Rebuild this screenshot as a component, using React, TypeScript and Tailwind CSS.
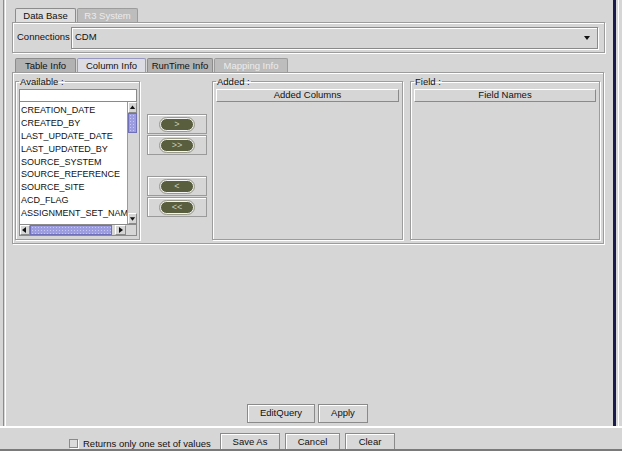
const etched = 'border border-[#9c9c9c] shadow-[inset_1px_1px_0_#ffffff,1px_1px_0_#ffffff]';
const raised = 'border-t border-l border-white border-r border-b border-r-[#8a8a8a] border-b-[#8a8a8a]';

const columns = [
  'CREATION_DATE',
  'CREATED_BY',
  'LAST_UPDATE_DATE',
  'LAST_UPDATED_BY',
  'SOURCE_SYSTEM',
  'SOURCE_REFERENCE',
  'SOURCE_SITE',
  'ACD_FLAG',
  'ASSIGNMENT_SET_NAME',
];

function Arrow({ dir }: { dir: 'up' | 'down' | 'left' | 'right' }) {
  const pts: Record<string, string> = {
    up: '1,5 4,1 7,5',
    down: '1,2 4,6 7,2',
    left: '5,1 1,4 5,7',
    right: '2,1 6,4 2,7',
  };
  return (
    <svg width="8" height="8" viewBox="0 0 8 8">
      <polygon points={pts[dir]} fill="#111" />
    </svg>
  );
}

function Tab({ label, state, width }: { label: string; state: 'active' | 'dark' | 'disabled' | 'light'; width: string }) {
  const styles: Record<string, string> = {
    active: 'bg-[#dcdce4] border-[#9898c0] text-[#111]',
    light: 'bg-[#dedede] border-[#8c8c8c] text-[#111]',
    dark: 'bg-[#b2b2b2] border-[#8c8c8c] text-[#111]',
    disabled: 'bg-[#bdbdbd] border-[#9c9c9c] text-[#ececec]',
  };
  return (
    <div className={`${width} h-[14px] ${styles[state]} border border-b-0 rounded-t-[2px] flex items-center justify-center leading-none whitespace-nowrap`}>
      {label}
    </div>
  );
}

function MoveButton({ label }: { label: string }) {
  return (
    <div className="w-[60px] h-[20px] border border-[#9a9a9a] shadow-[inset_1px_1px_0_#ffffff] flex items-center justify-center">
      <div className="w-[34px] h-[13px] rounded-full bg-[#585e3e] border border-[#f4f4f4] outline outline-1 outline-[#9a9a8a] flex items-center justify-center text-[#c9cbb5] text-[9px] leading-none">
        {label}
      </div>
    </div>
  );
}

function PushButton({ label, width, height = 'h-[19px]' }: { label: string; width: string; height?: string }) {
  return (
    <div className={`${width} ${height} border border-[#8a8a8a] shadow-[inset_1px_1px_0_#ffffff] bg-[#d8d8d8] flex items-center justify-center text-[#111] shrink-0`}>
      {label}
    </div>
  );
}

export default function App() {
  return (
    <div
      className="w-[622px] h-[451px] bg-[#d6d6d6] overflow-hidden flex flex-col text-[9.5px] text-[#111]"
      style={{ fontFamily: '"Liberation Sans", Arial, sans-serif' }}
    >
      <div className="h-[426px] flex shrink-0">
        <div className="w-[3px]" />
        <div className="w-[3px] border-l border-[#8c8c8c] border-r border-r-white" />
        <div className="w-[607px] pl-[6px] pt-[8px] flex flex-col">
          {/* outer tabs */}
          <div className="flex gap-[1px] pl-[3px]">
            <Tab label="Data Base" state="light" width="w-[61px]" />
            <Tab label="R3 System" state="disabled" width="w-[61px]" />
          </div>
          <div className={`w-[593px] h-[31px] ${etched} flex items-center pl-[4px] pr-[6px]`}>
            <span className="w-[54px]">Connections</span>
            <div className="flex-1 h-[22px] border border-[#8a8a8a] shadow-[inset_1px_1px_0_#ffffff,1px_1px_0_#ffffff] flex items-center pl-[3px] pr-[6px]">
              <span className="flex-1">CDM</span>
              <Arrow dir="down" />
            </div>
          </div>

          {/* inner tabs */}
          <div className="flex gap-[1px] pl-[3px] mt-[5px]">
            <Tab label="Table Info" state="dark" width="w-[61px]" />
            <Tab label="Column Info" state="active" width="w-[69px]" />
            <Tab label="RunTime Info" state="dark" width="w-[66px]" />
            <Tab label="Mapping Info" state="disabled" width="w-[74px]" />
          </div>
          <div className={`w-[592px] h-[172px] ${etched} flex pl-[2px] pt-[3px]`}>
            {/* Available */}
            <fieldset className={`w-[125px] h-[164px] ${etched} pl-[3px] pr-[2px]`}>
              <legend className="px-[1px] leading-[11px]">Available :</legend>
              <div className="w-[118px] h-[13px] bg-white border border-[#8a8a8a] mt-[2px]" />
              <div className="w-[118px] flex border-l border-[#8a8a8a]">
                <div className="w-[108px] h-[122px] bg-white overflow-hidden pt-[2px] pl-[1px] text-[9px]">
                  {columns.map((c) => (
                    <div key={c} className="h-[12.9px] leading-[12.9px] whitespace-nowrap">{c}</div>
                  ))}
                </div>
                <div className="w-[10px] h-[122px] bg-[#d6d6d6] border-l border-[#9a9a9a] flex flex-col">
                  <div className={`h-[11px] ${raised} flex items-center justify-center`}><Arrow dir="up" /></div>
                  <div className="h-[20px] bg-[#9c9ce0] border border-[#7070b8] bg-[radial-gradient(#c8c8f4_0.5px,transparent_0.6px)] bg-[length:3px_3px]" />
                  <div className="flex-1" />
                  <div className={`h-[11px] ${raised} flex items-center justify-center`}><Arrow dir="down" /></div>
                </div>
              </div>
              <div className="w-[118px] h-[12px] flex border border-[#8a8a8a] bg-[#d6d6d6]">
                <div className={`w-[10px] ${raised} flex items-center justify-center`}><Arrow dir="left" /></div>
                <div className="w-[82px] bg-[#9c9ce0] border border-[#7070b8] bg-[radial-gradient(#c8c8f4_0.5px,transparent_0.6px)] bg-[length:3px_3px]" />
                <div className="w-[3px]" />
                <div className={`w-[11px] ${raised} flex items-center justify-center`}><Arrow dir="right" /></div>
              </div>
            </fieldset>

            {/* move buttons */}
            <div className="w-[72px] flex flex-col items-start pl-[7px] pt-[38px]">
              <MoveButton label=">" />
              <div className="h-[1px]" />
              <MoveButton label=">>" />
              <div className="h-[21px]" />
              <MoveButton label="<" />
              <div className="h-[1px]" />
              <MoveButton label="<<" />
            </div>

            {/* Added */}
            <fieldset className={`w-[190px] h-[164px] ${etched} px-[3px]`}>
              <legend className="px-[1px] leading-[11px]">Added :</legend>
              <div className={`w-[183px] h-[13px] mt-[2px] ${raised} flex items-center justify-center`}>
                Added Columns
              </div>
            </fieldset>

            <div className="w-[7px]" />

            {/* Field */}
            <fieldset className={`w-[189px] h-[164px] ${etched} px-[3px]`}>
              <legend className="px-[1px] leading-[11px]">Field :</legend>
              <div className={`w-[182px] h-[13px] mt-[2px] ${raised} flex items-center justify-center`}>
                Field Names
              </div>
            </fieldset>
          </div>

          <div className="flex-1" />
          <div className="flex gap-[3px] pl-[235px] mb-[3px]">
            <PushButton label="EditQuery" width="w-[68px]" />
            <PushButton label="Apply" width="w-[50px]" />
          </div>
        </div>
        <div className="w-[3px] bg-[#1c1c4c]" />
        <div className="w-[2px]" />
        <div className="w-[1px] bg-white" />
      </div>

      {/* bottom strip */}
      <div className="flex-1 border-t-2 border-white flex items-start pt-[5px] border-b-2 border-b-[#7a7a7a] overflow-hidden">
        <div className="w-[69px] shrink-0" />
        <div className="w-[9px] h-[9px] mt-[6px] border border-[#8a8a8a] bg-[#dcdcdc] shadow-[1px_1px_0_#ffffff] shrink-0" />
        <span className="ml-[5px] mt-[4px] w-[136px] whitespace-nowrap shrink-0">Returns only one set of values</span>
        <div className="flex gap-[5px] ml-[1px]">
          <PushButton label="Save As" width="w-[60px]" height="h-[18px]" />
          <PushButton label="Cancel" width="w-[55px]" height="h-[18px]" />
          <PushButton label="Clear" width="w-[50px]" height="h-[18px]" />
        </div>
      </div>
    </div>
  );
}
